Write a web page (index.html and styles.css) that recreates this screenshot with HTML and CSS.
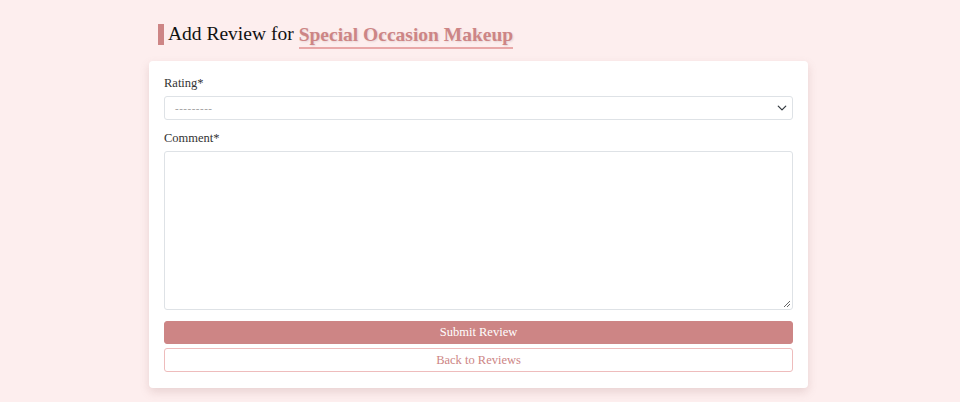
FILE: index.html
```html
<!DOCTYPE html>
<html>
<head>
<meta charset="utf-8">
<link rel="stylesheet" href="styles.css">
</head>
<body>
<div class="wrap">
  <h1 class="title"><span class="bar"></span><span class="lead">Add Review for</span><span class="svc">Special Occasion Makeup</span></h1>
  <form class="card">
    <label class="lbl">Rating*</label>
    <div class="select"><span class="ph">---------</span>
      <svg width="10" height="10" viewBox="0 0 16 16"><path d="M2 5l6 6 6-6" fill="none" stroke="#343a40" stroke-width="2" stroke-linecap="round" stroke-linejoin="round"/></svg>
    </div>
    <label class="lbl">Comment*</label>
    <div class="textarea">
      <svg class="grip" width="8" height="8" viewBox="0 0 8 8"><path d="M7 1L1 7M7 4L4 7" stroke="#666" stroke-width="1"/></svg>
    </div>
    <button type="button" class="btn primary">Submit Review</button>
    <button type="button" class="btn outline">Back to Reviews</button>
  </form>
</div>
</body>
</html>
```
FILE: styles.css
```css
* { box-sizing: border-box; }
html, body { margin: 0; padding: 0; }
body {
  background: #fdeeee;
  font-family: "Liberation Serif", "DejaVu Serif", serif;
  height: 402px;
  overflow: hidden;
}
.wrap {
  width: 659px;
  margin-left: 149px;
  padding-top: 20px;
}
.title {
  margin: 0 0 13px 9px;
  font-size: 19.5px;
  font-weight: 400;
  color: #111;
  display: flex;
  align-items: center;
  height: 28px;
  line-height: 28px;
  white-space: nowrap;
}
.bar {
  width: 6px;
  height: 21px;
  background: #cd8585;
  margin-right: 4px;
}
.lead { margin-right: 5px; }
.svc {
  color: #cd8585;
  font-weight: 700;
  border-bottom: 2px solid #e8a8a8;
  line-height: 24px;
  margin-top: 4px;
  text-shadow: 1px 1px 2px rgba(0,0,0,0.1);
}
.card {
  background: #fff;
  border-radius: 4px;
  box-shadow: 0 4px 10px rgba(150, 100, 100, 0.2);
  padding: 14px 15px 16px 15px;
  display: flex;
  flex-direction: column;
  height: 327px;
}
.lbl {
  font-size: 12.5px;
  color: #333;
  line-height: 16px;
  margin-bottom: 5px;
}
.select {
  height: 24px;
  border: 1px solid #dee2e6;
  border-radius: 3px;
  display: flex;
  align-items: center;
  justify-content: space-between;
  padding: 0 5px 0 10px;
  margin-bottom: 10px;
}
.ph { font-size: 11px; color: #999; letter-spacing: 0.5px; }
.textarea {
  height: 160px;
  border: 1px solid #dee2e6;
  border-radius: 3px;
  position: relative;
  margin-bottom: 11px;
}
.grip { position: absolute; right: 1px; bottom: 1px; }
.btn {
  font-family: inherit;
  font-size: 12.5px;
  height: 23px;
  border-radius: 3px;
  cursor: pointer;
  padding: 0;
}
.primary {
  background: #cd8585;
  color: #fff;
  border: 1px solid #cd8585;
  margin-bottom: 4px;
}
.outline {
  background: #fff;
  color: #cd8585;
  border: 1px solid #eebcbc;
  height: 24px;
}
```
